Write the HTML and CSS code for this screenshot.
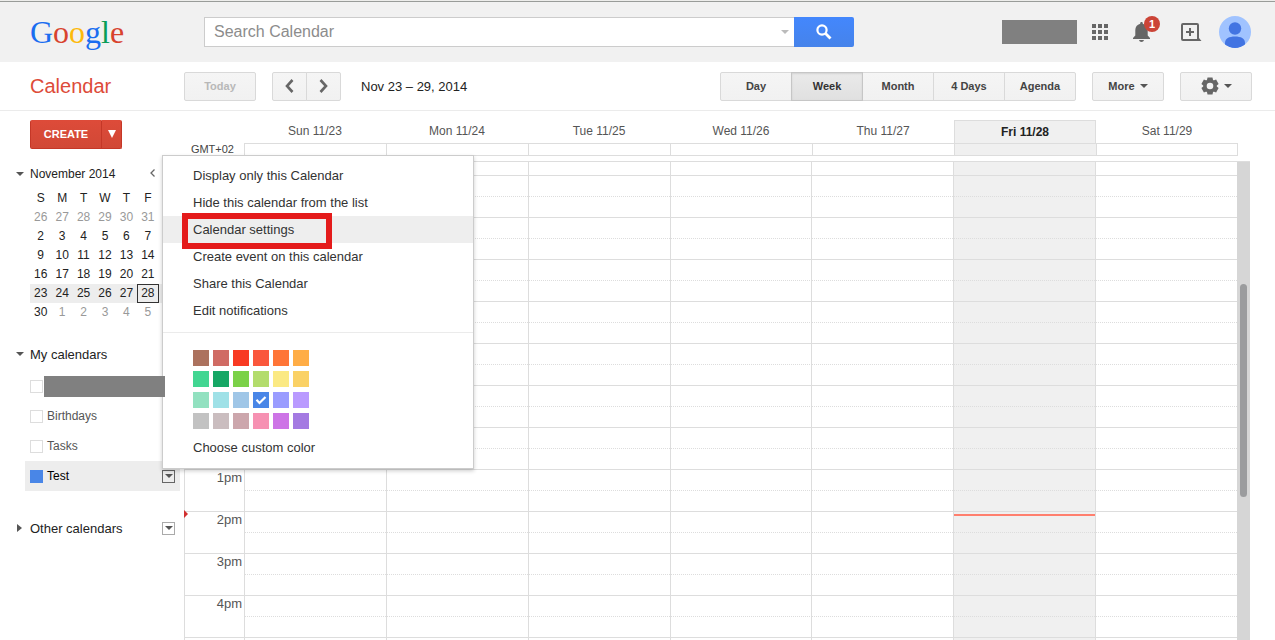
FILE: index.html
```
<!DOCTYPE html>
<html lang="en">
<head>
<meta charset="utf-8">
<title>Google Calendar</title>
<link rel="stylesheet" href="styles.css">
</head>
<body>
<header class="topbar">
  <a class="logo" href="#" aria-label="Google"><span class="c-blue">G</span><span class="c-red">o</span><span class="c-yellow">o</span><span class="c-blue">g</span><span class="c-green">l</span><span class="c-red">e</span></a>
  <form class="search">
    <div class="search-box">
      <input class="search-input" type="text" placeholder="Search Calendar" aria-label="Search Calendar">
      <button class="search-options" type="button" aria-label="Search options"><i class="caret caret-light"></i></button>
    </div>
    <button class="search-button" type="button" aria-label="Search">
      <svg width="16" height="16" viewBox="0 0 16 16" fill="none" stroke="#fff"><circle cx="6" cy="6" r="4.6" stroke-width="2.2"/><path d="M9.3 9.3l5.2 5.2" stroke-width="2.8"/></svg>
    </button>
  </form>
  <div class="account">
    <span class="redacted account-name"></span>
    <button class="icon-button apps" aria-label="Apps">
      <svg width="16" height="16" viewBox="0 0 16 16" fill="#666"><path d="M0 0h4v4H0zM6 0h4v4H6zM12 0h4v4h-4zM0 6h4v4H0zM6 6h4v4H6zM12 6h4v4h-4zM0 12h4v4H0zM6 12h4v4H6zM12 12h4v4h-4z"/></svg>
    </button>
    <button class="icon-button bell" aria-label="Notifications">
      <svg width="17" height="20" viewBox="0 0 17 20" fill="#666"><path d="M8.500 0C7.500 0 7.200.7 7.200 1.700 4 2.500 2.300 5 2.300 8v5.500L0 16v1h17v-1l-2.300-2.500V8c0-3-1.700-5.500-4.900-6.300C9.800.7 9.500 0 8.500 0zM6 18h5c-.3 1.300-1.300 2-2.500 2S6.300 19.300 6 18z"/></svg>
      <span class="badge">1</span>
    </button>
    <button class="icon-button share" aria-label="Share">
      <svg width="21" height="18" viewBox="0 0 21 18" fill="none" stroke="#666" stroke-width="2"><path d="M17 14.500V2a1 1 0 0 0-1-1H2a1 1 0 0 0-1 1v14a1 1 0 0 0 1 1h17"/><path d="M9 5v8M5 9h8"/><path d="M16 13.500h2v1.500l2.500 3H16z" fill="#666" stroke="none"/></svg>
    </button>
    <button class="icon-button" aria-label="Account">
      <svg width="32" height="32" viewBox="0 0 32 32"><defs><clipPath id="disc"><circle cx="16" cy="16" r="16"/></clipPath></defs><circle cx="16" cy="16" r="16" fill="#a0c3ff"/><g fill="#4274e2" clip-path="url(#disc)"><circle cx="16" cy="12.500" r="6.200"/><path d="M6 27c0-4.500 4-6.500 10-6.500S26 22.500 26 27v2.500L16 33 6 29.500z"/></g></svg>
    </button>
  </div>
</header>

<nav class="toolbar">
  <a class="app-name" href="#">Calendar</a>
  <button class="btn today" disabled>Today</button>
  <div class="group pager">
    <button class="btn" aria-label="Previous week"><svg width="9" height="14" viewBox="0 0 9 14" fill="none" stroke="#666" stroke-width="2.600"><path d="M7.500 1L2 7l5.500 6"/></svg></button>
    <button class="btn" aria-label="Next week"><svg width="9" height="14" viewBox="0 0 9 14" fill="none" stroke="#666" stroke-width="2.600"><path d="M1.500 1L7 7l-5.500 6"/></svg></button>
  </div>
  <span class="range">Nov 23 – 29, 2014</span>
  <div class="group views">
    <button class="btn">Day</button>
    <button class="btn active">Week</button>
    <button class="btn">Month</button>
    <button class="btn">4 Days</button>
    <button class="btn">Agenda</button>
  </div>
  <button class="btn more">More <i class="caret"></i></button>
  <button class="btn settings" aria-label="Settings">
    <svg width="18" height="18" viewBox="0 0 18 18"><g fill="#666"><path id="tooth" d="M6.500 0.500h5l.8 4H5.700zM6.500 17.500h5l.8-4H5.700z"/><use href="#tooth" transform="rotate(60 9 9)"/><use href="#tooth" transform="rotate(120 9 9)"/></g><circle cx="9" cy="9" r="5" fill="none" stroke="#666" stroke-width="3.400"/></svg>
    <i class="caret"></i>
  </button>
</nav>

<div class="content">
  <aside class="sidebar">
    <div class="create">
      <button class="create-main">CREATE</button>
      <button class="create-more" aria-label="More create options"><i></i></button>
    </div>

    <div class="section month-head">
      <i class="caret"></i><span class="section-name">November 2014</span>
      <button class="month-prev" aria-label="Previous month"><svg width="5" height="8" viewBox="0 0 5 8" fill="none" stroke="#666" stroke-width="1.300"><path d="M4.500 .5L1 4l3.500 3.500"/></svg></button>
    </div>
    <table class="month">
      <thead><tr><th>S</th><th>M</th><th>T</th><th>W</th><th>T</th><th>F</th><th></th></tr></thead>
      <tbody>
        <tr><td class="off">26</td><td class="off">27</td><td class="off">28</td><td class="off">29</td><td class="off">30</td><td class="off">31</td><td></td></tr>
        <tr><td>2</td><td>3</td><td>4</td><td>5</td><td>6</td><td>7</td><td></td></tr>
        <tr><td>9</td><td>10</td><td>11</td><td>12</td><td>13</td><td>14</td><td></td></tr>
        <tr><td>16</td><td>17</td><td>18</td><td>19</td><td>20</td><td>21</td><td></td></tr>
        <tr class="current"><td>23</td><td>24</td><td>25</td><td>26</td><td>27</td><td class="selected">28</td><td></td></tr>
        <tr><td>30</td><td class="off">1</td><td class="off">2</td><td class="off">3</td><td class="off">4</td><td class="off">5</td><td></td></tr>
      </tbody>
    </table>

    <div class="section mine"><i class="caret"></i><span class="section-name">My calendars</span></div>
    <ul class="calendars">
      <li><input type="checkbox" aria-label="Personal calendar"><span class="redacted calendar-name"></span></li>
      <li><input type="checkbox" id="birthdays"><label for="birthdays">Birthdays</label></li>
      <li><input type="checkbox" id="tasks"><label for="tasks">Tasks</label></li>
      <li class="open"><input type="checkbox" id="test" checked><label for="test">Test</label><button class="drop" aria-label="Test options"><i class="caret"></i></button></li>
    </ul>

    <div class="section others"><i class="caret caret-right"></i><span class="section-name">Other calendars</span><button class="drop" aria-label="Other calendars options"><i class="caret"></i></button></div>
  </aside>

  <main class="week">
    <table class="week-head">
      <thead><tr><td class="gutter"></td><th>Sun 11/23</th><th>Mon 11/24</th><th>Tue 11/25</th><th>Wed 11/26</th><th>Thu 11/27</th><th class="now">Fri 11/28</th><th>Sat 11/29</th></tr></thead>
      <tbody><tr><td class="gutter">GMT+02</td><td></td><td></td><td></td><td></td><td></td><td class="now"></td><td></td></tr></tbody>
    </table>
    <div class="scroller">
      <table class="hours">
        <tbody>
          <tr class="partial"><th></th><td></td><td></td><td></td><td></td><td></td><td class="now"></td><td></td></tr>
          <tr><th></th><td></td><td></td><td></td><td></td><td></td><td class="now"></td><td></td></tr>
          <tr><th></th><td></td><td></td><td></td><td></td><td></td><td class="now"></td><td></td></tr>
          <tr><th></th><td></td><td></td><td></td><td></td><td></td><td class="now"></td><td></td></tr>
          <tr><th></th><td></td><td></td><td></td><td></td><td></td><td class="now"></td><td></td></tr>
          <tr><th></th><td></td><td></td><td></td><td></td><td></td><td class="now"></td><td></td></tr>
          <tr><th></th><td></td><td></td><td></td><td></td><td></td><td class="now"></td><td></td></tr>
          <tr><th></th><td></td><td></td><td></td><td></td><td></td><td class="now"></td><td></td></tr>
          <tr><th>1pm</th><td></td><td></td><td></td><td></td><td></td><td class="now"></td><td></td></tr>
          <tr><th>2pm<i class="now-arrow"></i></th><td></td><td></td><td></td><td></td><td></td><td class="now"><i class="now-line"></i></td><td></td></tr>
          <tr><th>3pm</th><td></td><td></td><td></td><td></td><td></td><td class="now"></td><td></td></tr>
          <tr><th>4pm</th><td></td><td></td><td></td><td></td><td></td><td class="now"></td><td></td></tr>
          <tr><th></th><td></td><td></td><td></td><td></td><td></td><td class="now"></td><td></td></tr>
        </tbody>
      </table>
      <div class="track"><div class="thumb"></div></div>
    </div>
  </main>
</div>

<div class="menu" role="menu">
  <button role="menuitem">Display only this Calendar</button>
  <button role="menuitem">Hide this calendar from the list</button>
  <button role="menuitem" class="hover">Calendar settings</button>
  <button role="menuitem">Create event on this calendar</button>
  <button role="menuitem">Share this Calendar</button>
  <button role="menuitem">Edit notifications</button>
  <hr>
  <div class="swatches">
    <button class="s1" aria-label="Brown"></button><button class="s2" aria-label="Dusty red"></button><button class="s3" aria-label="Red"></button><button class="s4" aria-label="Coral"></button><button class="s5" aria-label="Orange"></button><button class="s6" aria-label="Light orange"></button>
    <button class="s7" aria-label="Mint"></button><button class="s8" aria-label="Green"></button><button class="s9" aria-label="Bright green"></button><button class="s10" aria-label="Lime"></button><button class="s11" aria-label="Yellow"></button><button class="s12" aria-label="Gold"></button>
    <button class="s13" aria-label="Pale green"></button><button class="s14" aria-label="Pale cyan"></button><button class="s15" aria-label="Pale blue"></button><button class="s16" aria-label="Blue"><svg width="16" height="16" viewBox="0 0 16 16" fill="none" stroke="#fff" stroke-width="2.200"><path d="M3.500 7.800l3 3.200L12.500 5"/></svg></button><button class="s17" aria-label="Periwinkle"></button><button class="s18" aria-label="Lavender"></button>
    <button class="s19" aria-label="Gray"></button><button class="s20" aria-label="Warm gray"></button><button class="s21" aria-label="Rose gray"></button><button class="s22" aria-label="Pink"></button><button class="s23" aria-label="Magenta"></button><button class="s24" aria-label="Purple"></button>
  </div>
  <button role="menuitem">Choose custom color</button>
  <div class="highlight"></div>
</div>
</body>
</html>
```
FILE: styles.css
```
* { box-sizing: border-box; }

body {
  margin: 0;
  height: 100vh;
  display: flex;
  flex-direction: column;
  overflow: hidden;
  position: relative;
  background: #fff;
  color: #222;
  font: 13px/19px "Liberation Sans", Arial, sans-serif;
}

button {
  margin: 0;
  padding: 0;
  border: 0;
  background: none;
  color: inherit;
  font: inherit;
  cursor: pointer;
}

a { text-decoration: none; }
svg { display: block; }
table { border-spacing: 0; table-layout: fixed; }
th, td { padding: 0; }

.redacted { background: #808080; }

.caret {
  display: inline-block;
  border: 4px solid transparent;
  border-top-color: #555;
  border-bottom: 0;
}
.caret-light { border-top-color: #bbb; }
.caret-right {
  border: 4px solid transparent;
  border-left: 5px solid #555;
  border-right: 0;
}

/* Top bar */
.topbar {
  flex: none;
  height: 62px;
  padding: 2px 24px 0 30px;
  display: flex;
  align-items: center;
  background: linear-gradient(#ededeb 1px, #999c99 1px, #999c99 2px, #f1f1f1 2px);
}
.logo {
  width: 174px;
  font: 32px/40px "Liberation Serif", "Times New Roman", serif;
}
.c-blue { color: #1a6df0; }
.c-red { color: #d8432e; }
.c-yellow { color: #fdb90b; }
.c-green { color: #0a9d57; }

.search { display: flex; width: 650px; height: 30px; }
.search-box {
  flex: 1;
  display: flex;
  align-items: center;
  border: 1px solid #ccc;
  border-right: 0;
  background: #fff;
}
.search-input {
  flex: 1;
  min-width: 0;
  padding: 0 9px;
  border: 0;
  outline: 0;
  background: none;
  color: #333;
  font: 16px/24px "Liberation Sans", Arial, sans-serif;
}
.search-input::placeholder { color: #8c8c8c; }
.search-options { display: flex; padding: 5px; }
.search-button {
  width: 60px;
  display: flex;
  align-items: center;
  justify-content: center;
  border-radius: 0 2px 2px 0;
  background: linear-gradient(#4387fd, #4683ea);
}

.account { margin-left: auto; display: flex; align-items: center; }
.account-name { width: 75px; height: 24px; margin-right: 15px; }
.icon-button { position: relative; }
.apps { margin-right: 25px; }
.bell { margin-right: 31px; }
.share { margin-right: 17px; }
.badge {
  position: absolute;
  left: 11px;
  top: -6px;
  width: 16px;
  height: 16px;
  border-radius: 8px;
  background: #cb4437;
  color: #fff;
  font: bold 11px/16px "Liberation Sans", Arial, sans-serif;
}

/* Toolbar */
.toolbar {
  flex: none;
  height: 49px;
  padding: 0 23px 0 30px;
  display: flex;
  align-items: center;
  border-bottom: 1px solid #ebebeb;
}
.app-name { width: 154px; color: #dd4b39; font-size: 20px; line-height: 24px; }
.btn {
  width: 72px;
  height: 29px;
  display: flex;
  align-items: center;
  justify-content: center;
  border: 1px solid #d9d9d9;
  border-radius: 2px;
  background: linear-gradient(#f5f5f5, #f1f1f1);
  color: #444;
  font-size: 11px;
  font-weight: bold;
}
.today { color: #b8b8b8; }
.group { display: flex; }
.group .btn + .btn { margin-left: -1px; }
.group .btn:not(:first-child) { border-top-left-radius: 0; border-bottom-left-radius: 0; }
.group .btn:not(:last-child) { border-top-right-radius: 0; border-bottom-right-radius: 0; }
.pager { margin: 0 20px 0 16px; }
.pager .btn { width: 35px; }
.range { font-size: 13px; }
.views { margin-left: auto; }
.views .active {
  position: relative;
  border-color: #c6c6c6;
  background: linear-gradient(#eaeaea, #e0e0e0);
  box-shadow: inset 0 1px 2px rgba(0, 0, 0, .1);
  color: #333;
}
.more { margin: 0 16px; gap: 5px; }
.settings { gap: 5px; }

/* Sidebar */
.content { flex: 1; min-height: 0; display: flex; }
.sidebar { flex: none; width: 184px; padding-top: 9px; }
.create { width: 92px; height: 29px; margin-left: 30px; display: flex; }
.create button {
  border: 1px solid #c53727;
  border-top-color: #dd4b39;
  background: linear-gradient(#dd4b39, #d14836);
  color: #fff;
  font-size: 11px;
  font-weight: bold;
}
.create .create-main { width: 72px; border-radius: 2px 0 0 2px; }
.create .create-more {
  width: 20px;
  border-left: 0;
  border-radius: 0 2px 2px 0;
}
.create-more i {
  display: inline-block;
  border: 4px solid transparent;
  border-top: 8px solid #fff;
  border-bottom: 0;
}

.section { display: flex; align-items: center; height: 20px; padding: 0 9px 0 16px; }
.section-name { margin-left: 6px; }
.section .caret-right { margin: 0 2px 0 1px; }
.month-head { margin-top: 15px; }
.month-head .section-name { font-size: 12px; }
.month-prev { margin: 0 20px 2px auto; }

.month {
  width: 150px;
  margin: 5px 0 0 30px;
  font-size: 12px;
  text-align: center;
}
.month th { font-weight: normal; }
.month th, .month td { height: 19px; line-height: 17px; }
.month .off { color: #999; }
.month .current td { background: #ededed; }
.month .selected { border: 1px solid #333; }

.mine { margin-top: 22px; }
.calendars { margin: 7px 4px 27px 25px; padding: 0; list-style: none; }
.calendars li {
  display: flex;
  align-items: center;
  height: 30px;
  padding: 0 5px;
  color: #555;
  font-size: 12px;
}
.calendars .open { background: #ededed; color: #000; }
.calendars input {
  appearance: none;
  flex: none;
  width: 13px;
  height: 13px;
  margin: 0 4px 0 0;
  border: 1px solid #ddd;
  background: #fff;
}
.calendars input:checked { border-color: #4986e7; background: #4986e7; }
.calendar-name {
  position: relative;
  z-index: 3;
  flex: none;
  width: 121px;
  height: 21px;
  margin-left: -3px;
}
.drop {
  width: 13px;
  height: 13px;
  margin-left: auto;
  display: flex;
  align-items: center;
  justify-content: center;
  border: 1px solid #aaa;
  background: #fff;
}
.open .drop { border-color: #666; background: #ededed; }

/* Week */
.week { flex: 1; min-width: 0; display: flex; flex-direction: column; padding: 9px 25px 0 0; }
.week-head { width: calc(100% - 12px); margin-bottom: 5px; font-size: 12px; }
.week-head .gutter { width: 60px; }
.week-head th { height: 23px; color: #555; font-weight: normal; }
.week-head th.now {
  border: 1px solid #ddd;
  border-bottom: 0;
  background: #f0f0f0;
  color: #222;
  font-weight: bold;
}
.week-head tbody td { height: 13px; border: 1px solid #ddd; border-right: 0; }
.week-head tbody td:last-child { border-right: 1px solid #ddd; }
.week-head tbody .now { background: #f0f0f0; }
.week-head tbody .gutter {
  padding-right: 10px;
  border: 0;
  color: #444;
  font-size: 11px;
  line-height: 11px;
  text-align: right;
}

.scroller { flex: 1; min-height: 0; display: flex; align-items: stretch; overflow: hidden; border-top: 1px solid #ddd; }
.hours { flex: 1; min-width: 0; height: 0; border-left: 1px solid #ddd; }
.hours th {
  position: relative;
  width: 59px;
  padding-right: 2px;
  border-top: 1px solid #ddd;
  color: #555;
  font: 13px/15px "Liberation Sans", Arial, sans-serif;
  text-align: right;
  vertical-align: top;
}
.hours td {
  position: relative;
  height: 42px;
  border-top: 1px solid #ddd;
  border-left: 1px solid #ddd;
  background: repeating-linear-gradient(90deg, #ddd 0 1px, transparent 1px 2px) 0 20px / 100% 1px no-repeat;
}
.hours .now { background-color: #f0f0f0; }
.hours .partial th, .hours .partial td { height: 13px; border-top: 0; }
.now-line {
  position: absolute;
  left: 0;
  right: 0;
  top: 2px;
  height: 2px;
  background: #ff7f6e;
}
.now-arrow {
  position: absolute;
  left: -1px;
  top: -2px;
  border: 4px solid transparent;
  border-left-color: #d12f2f;
  border-right: 0;
}
.track { flex: none; width: 13px; padding: 122px 3px 0; background: #d6d6d6; }
.thumb { height: 213px; border-radius: 4px; background: #9b9c9e; }

/* Calendar options menu */
.menu {
  position: absolute;
  z-index: 2;
  left: 162px;
  top: 155px;
  width: 312px;
  padding: 6px 0 7px;
  border: 1px solid #ccc;
  background: #fff;
  box-shadow: 0 2px 4px rgba(0, 0, 0, .2);
  color: #333;
}
.menu > button {
  display: block;
  width: 100%;
  height: 27px;
  padding-left: 30px;
  text-align: left;
}
.menu .hover { background: #eee; }
.menu hr { margin: 8px 0 17px; border: 0; border-top: 1px solid #ebebeb; }
.swatches {
  display: grid;
  grid-template-columns: repeat(6, 16px);
  grid-auto-rows: 16px;
  gap: 5px 4px;
  margin: 0 30px 5px;
}
.highlight {
  position: absolute;
  left: 19px;
  top: 57px;
  width: 150px;
  height: 36px;
  border: 6px solid #e41b1b;
}

.s1 { background: #ac725e; }
.s2 { background: #d06b64; }
.s3 { background: #f83a22; }
.s4 { background: #fa573c; }
.s5 { background: #ff7537; }
.s6 { background: #ffad46; }
.s7 { background: #42d692; }
.s8 { background: #16a765; }
.s9 { background: #7bd148; }
.s10 { background: #b3dc6c; }
.s11 { background: #fbe983; }
.s12 { background: #fad165; }
.s13 { background: #92e1c0; }
.s14 { background: #9fe1e7; }
.s15 { background: #9fc6e7; }
.s16 { background: #4986e7; }
.s17 { background: #9a9cff; }
.s18 { background: #b99aff; }
.s19 { background: #c2c2c2; }
.s20 { background: #cabdbf; }
.s21 { background: #cca6ac; }
.s22 { background: #f691b2; }
.s23 { background: #cd74e6; }
.s24 { background: #a47ae2; }
```
